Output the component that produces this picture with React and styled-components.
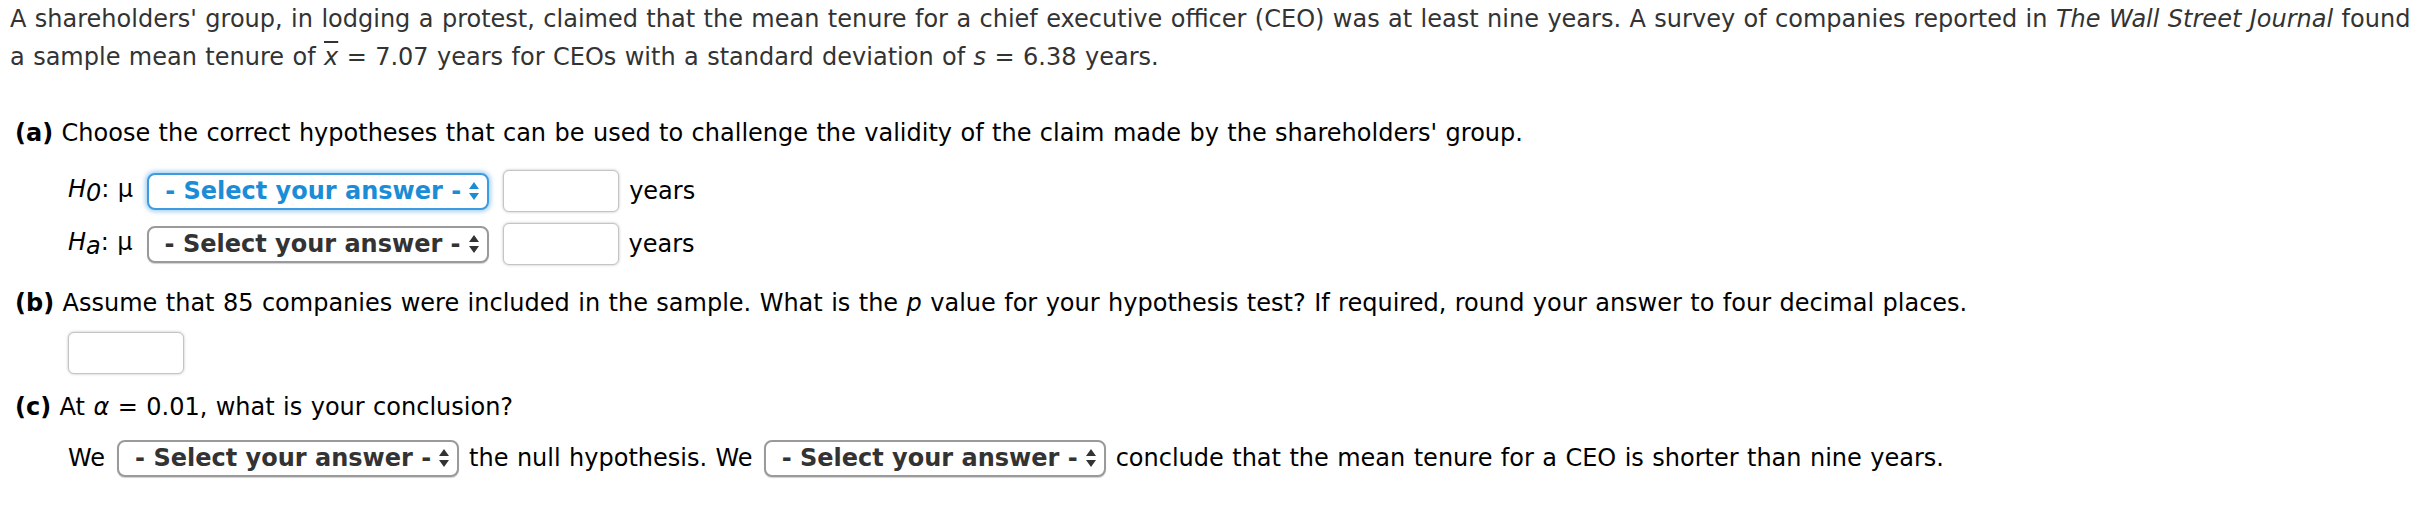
import React from "react";
import styled, { createGlobalStyle } from "styled-components";

const GlobalStyle = createGlobalStyle`
  body {
    margin: 0;
    background: #fff;
    font-family: "DejaVu Sans", Verdana, sans-serif;
  }
`;

const Page = styled.div`
  padding: 0 2px 0 10px;
  font-size: 24px;
  word-spacing: 0.8px;
  color: #000;
`;

const Intro = styled.p`
  margin: 0;
  line-height: 38px;
  color: #333;
`;

const XBar = styled.i`
  text-decoration: overline;
`;

const Part = styled.section`
  padding-left: 5px;
  margin-top: ${(p) => p.$top}px;
`;

const PartTitle = styled.p`
  margin: 0;
  line-height: 38px;
`;

const Row = styled.div`
  display: flex;
  align-items: center;
  height: 44px;
  padding-left: 53px;
  margin-top: ${(p) => p.$top}px;
  white-space: nowrap;
`;

const Label = styled.span`
  margin-right: ${(p) => p.$gap || 0}px;
`;

const Sub = styled.span`
  vertical-align: -4px;
`;

const SelectBox = styled.div`
  box-sizing: border-box;
  width: 342px;
  height: 37px;
  flex: none;
  display: flex;
  align-items: center;
  justify-content: space-between;
  padding: 0 8px 0 16px;
  border: 2px solid ${(p) => (p.$focused ? "#3d9be0" : "#9a9a9a")};
  border-radius: 8px;
  background: #fff;
  color: ${(p) => (p.$focused ? "#1b8dd6" : "#333")};
  font-weight: bold;
  word-spacing: 0;
  box-shadow: ${(p) =>
    p.$focused
      ? "0 0 4px 2px rgba(61, 155, 224, 0.45)"
      : "0 1px 1px rgba(0, 0, 0, 0.18)"};
  margin-right: ${(p) => p.$gap || 0}px;
  cursor: default;
`;

const TextInput = styled.div`
  box-sizing: border-box;
  width: 116px;
  height: 42px;
  flex: none;
  border: 1px solid #c4c4c4;
  border-radius: 6px;
  background: #fff;
  box-shadow: 0 0 3px rgba(0, 0, 0, 0.25);
  margin: ${(p) => p.$margin || "0"};
`;

function Arrows() {
  return (
    <svg width="10" height="18" viewBox="0 0 10 18">
      <path d="M0 7 L5 0 L10 7 Z M0 11 L5 18 L10 11 Z" fill="currentColor" />
    </svg>
  );
}

function Select({ focused, gap }) {
  return (
    <SelectBox $focused={focused} $gap={gap}>
      <span>- Select your answer -</span>
      <Arrows />
    </SelectBox>
  );
}

export default function App() {
  return (
    <Page>
      <GlobalStyle />
      <Intro>
        A shareholders' group, in lodging a protest, claimed that the mean
        tenure for a chief executive officer (CEO) was at least nine years. A
        survey of companies reported in <i>The Wall Street Journal</i> found a
        sample mean tenure of <XBar>x</XBar> = 7.07 years for CEOs with a
        standard deviation of <i>s</i> = 6.38 years.
      </Intro>

      <Part $top={38}>
        <PartTitle>
          <b>(a)</b> Choose the correct hypotheses that can be used to
          challenge the validity of the claim made by the shareholders' group.
        </PartTitle>
        <Row $top={17}>
          <Label $gap={14}>
            <i>
              H<Sub>0</Sub>
            </i>
            : μ
          </Label>
          <Select focused />
          <TextInput $margin="0 10px 0 14px" />
          <span>years</span>
        </Row>
        <Row $top={9}>
          <Label $gap={14}>
            <i>
              H<Sub>a</Sub>
            </i>
            : μ
          </Label>
          <Select />
          <TextInput $margin="0 10px 0 14px" />
          <span>years</span>
        </Row>
      </Part>

      <Part $top={18}>
        <PartTitle>
          <b>(b)</b> Assume that 85 companies were included in the sample. What
          is the <i>p</i> value for your hypothesis test? If required, round
          your answer to four decimal places.
        </PartTitle>
        <Row $top={9}>
          <TextInput />
        </Row>
      </Part>

      <Part $top={13}>
        <PartTitle>
          <b>(c)</b> At <i>α</i> = 0.01, what is your conclusion?
        </PartTitle>
        <Row $top={10}>
          <Label $gap={12}>We</Label>
          <Select gap={10} />
          <Label $gap={11}>the null hypothesis. We</Label>
          <Select gap={10} />
          <span>
            conclude that the mean tenure for a CEO is shorter than nine years.
          </span>
        </Row>
      </Part>
    </Page>
  );
}
